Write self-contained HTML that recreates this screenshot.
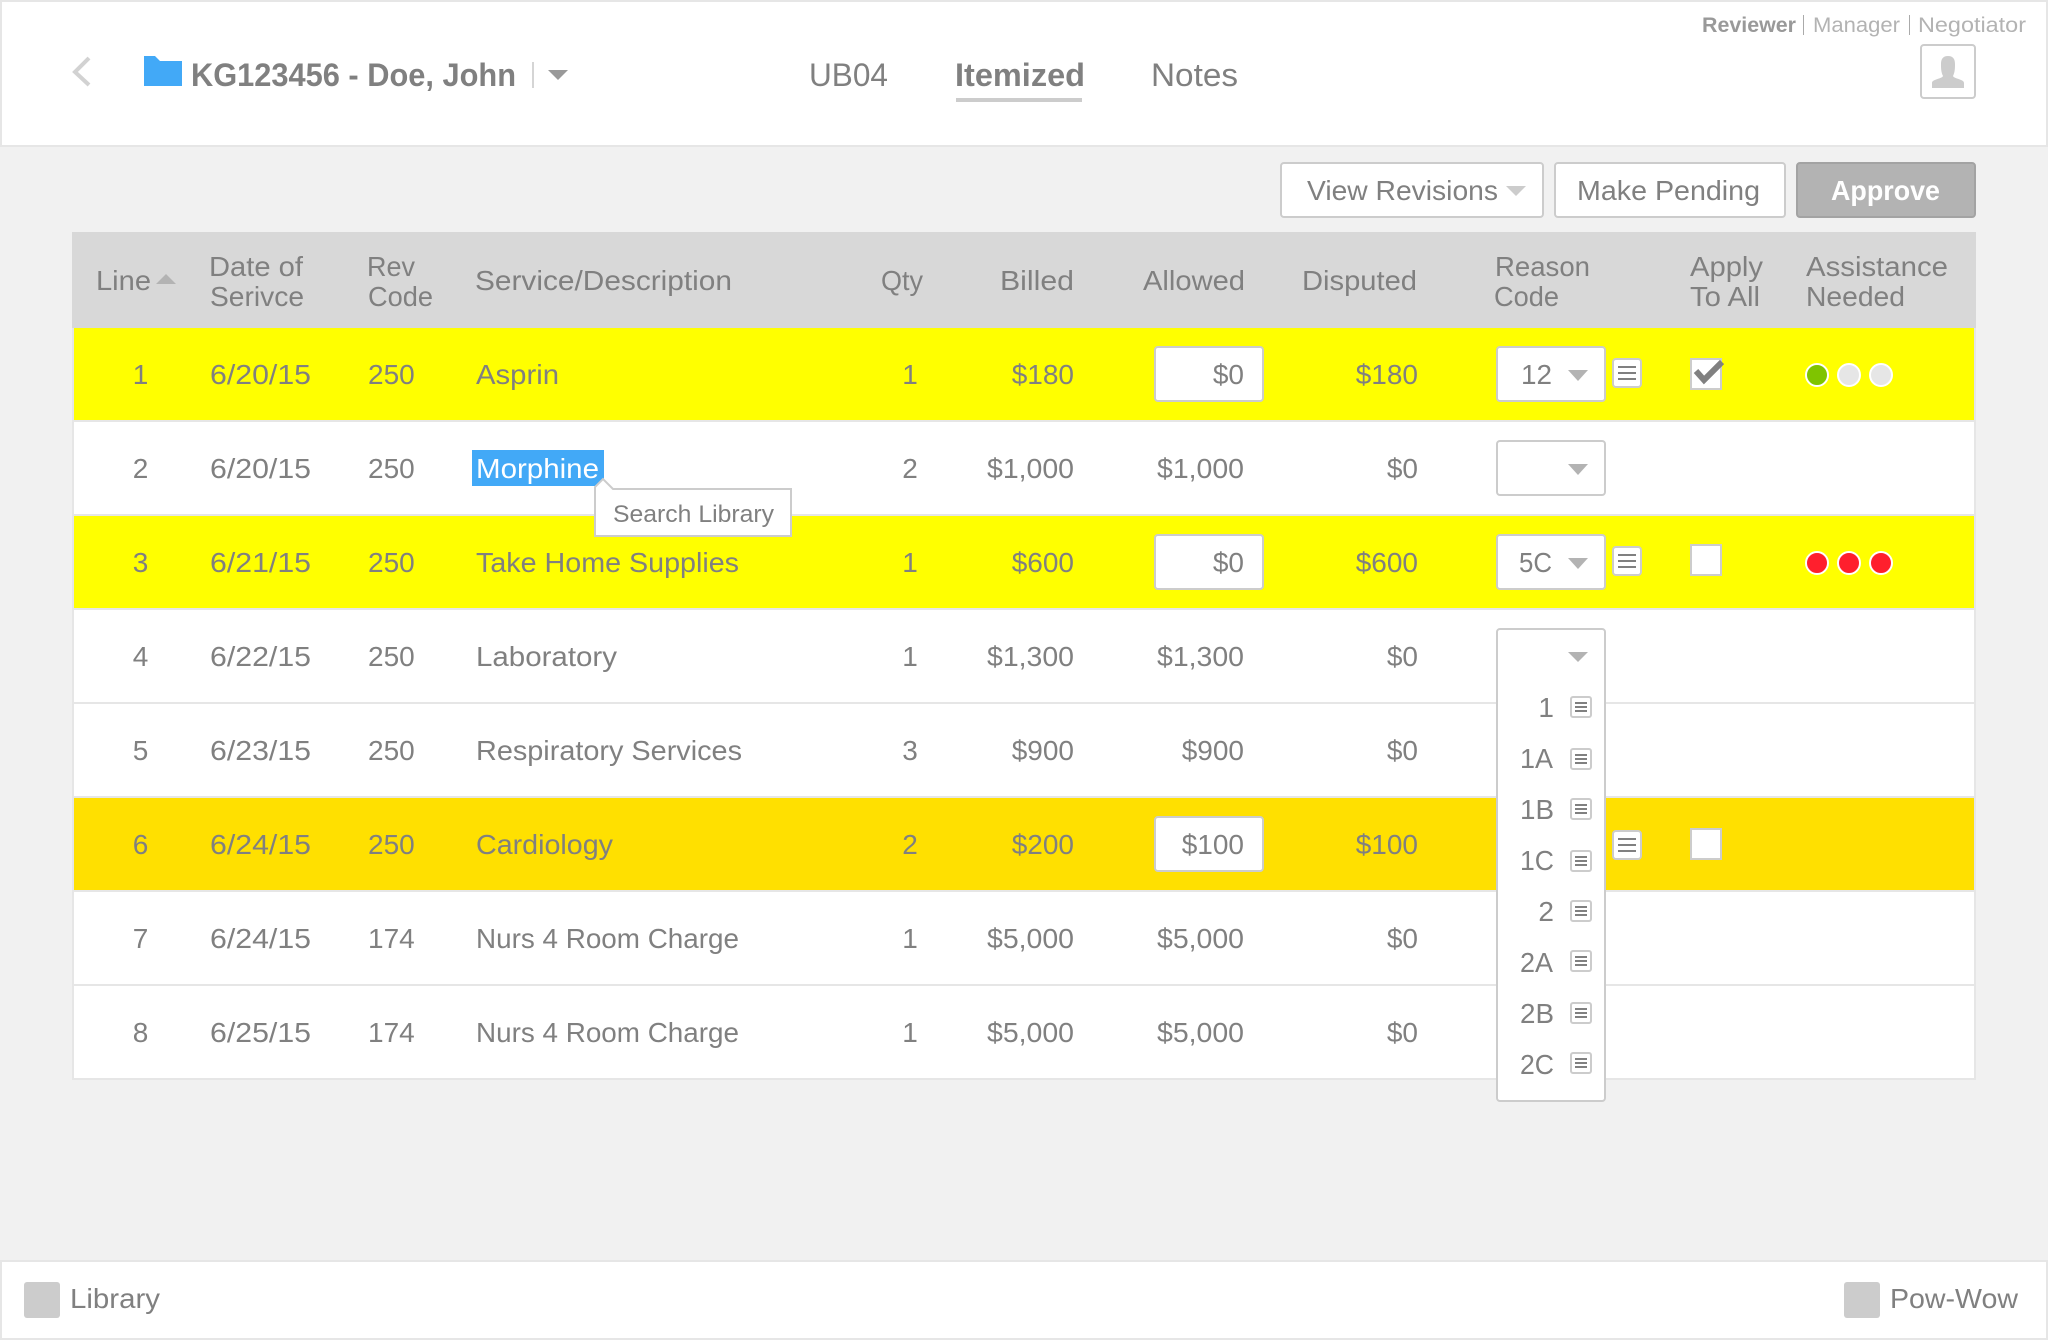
<!DOCTYPE html>
<html lang="en">
<head>
<meta charset="utf-8">
<title>KG123456 - Doe, John - Itemized</title>
<style>
html,body{margin:0;padding:0;background:#f1f1f1;width:2048px;height:1340px;overflow:hidden}
svg{display:block}
text{font-family:"Liberation Sans",Arial,sans-serif;font-size:28px;fill:#808080}
.e{text-anchor:end}
.m{text-anchor:middle}
.b{font-weight:bold}
.box{fill:#fff;stroke:#ccc;stroke-width:2}
.arr{fill:#b3b3b3}
</style>
</head>
<body>
<svg xmlns="http://www.w3.org/2000/svg" width="2048" height="1340" viewBox="0 0 2048 1340">
<defs>
<g id="note"><rect class="box" x="1" y="1" width="28" height="28" rx="3"/><rect x="6" y="8" width="18" height="2" fill="#808080"/><rect x="6" y="14" width="18" height="2" fill="#808080"/><rect x="6" y="20" width="18" height="2" fill="#808080"/></g>
<g id="mini"><rect class="box" x="1" y="1" width="20" height="20" rx="2"/><rect x="5" y="6" width="12" height="2" fill="#808080"/><rect x="5" y="10" width="12" height="2" fill="#808080"/><rect x="5" y="14" width="12" height="2" fill="#808080"/></g>
</defs>

<!-- top bar -->
<rect x="1" y="1" width="2046" height="145" fill="#fff" stroke="#e6e6e6" stroke-width="2"/>
<polyline points="89,58 75,72 89,85" fill="none" stroke="#d2d2d2" stroke-width="4"/>
<path d="M144 56H155L160 61H182V86H144Z" fill="#42a9f7"/>
<text class="b" x="191" y="86" style="font-size:32px" textLength="325" lengthAdjust="spacingAndGlyphs">KG123456 - Doe, John</text>
<rect x="532" y="62" width="2" height="26" fill="#d5d5d5"/>
<path d="M548 70H568L558 80Z" fill="#999"/>
<text x="809" y="86" style="font-size:32px" textLength="79" lengthAdjust="spacingAndGlyphs">UB04</text>
<text class="b" x="955" y="86" style="font-size:32px" textLength="130" lengthAdjust="spacingAndGlyphs">Itemized</text>
<rect x="956" y="98" width="126" height="4" fill="#ccc"/>
<text x="1151" y="86" style="font-size:32px" textLength="87" lengthAdjust="spacingAndGlyphs">Notes</text>
<text class="b" x="1702" y="32" style="font-size:21px;fill:#999" textLength="94" lengthAdjust="spacingAndGlyphs">Reviewer</text>
<rect x="1803" y="15" width="1" height="20" fill="#aaa"/>
<text x="1813" y="32" style="font-size:21px;fill:#b3b3b3" textLength="87" lengthAdjust="spacingAndGlyphs">Manager</text>
<rect x="1909" y="15" width="1" height="20" fill="#aaa"/>
<text x="1918" y="32" style="font-size:21px;fill:#b3b3b3" textLength="108" lengthAdjust="spacingAndGlyphs">Negotiator</text>
<rect class="box" x="1921" y="45" width="54" height="53" rx="3"/>
<path d="M1932 88V83C1932 79 1942 79 1943 76C1941 72 1941 68 1941 64C1941 59 1943 56 1948 56C1953 56 1955 59 1955 64C1955 68 1955 72 1953 76C1954 79 1964 79 1964 83V88Z" fill="#ccc"/>

<!-- action buttons -->
<rect class="box" x="1281" y="163" width="262" height="54" rx="3"/>
<text x="1307" y="200" textLength="191" lengthAdjust="spacingAndGlyphs">View Revisions</text>
<path d="M1506 186H1526L1516 196Z" fill="#ccc"/>
<rect class="box" x="1555" y="163" width="230" height="54" rx="3"/>
<text x="1577" y="200" textLength="183" lengthAdjust="spacingAndGlyphs">Make Pending</text>
<rect x="1797" y="163" width="178" height="54" rx="3" fill="#b3b3b3" stroke="#a3a3a3" stroke-width="2"/>
<text class="b" x="1831" y="200" style="fill:#fff" textLength="109" lengthAdjust="spacingAndGlyphs">Approve</text>

<!-- table head -->
<rect x="72" y="232" width="1904" height="96" fill="#d8d8d8"/>
<text x="96" y="290" textLength="55" lengthAdjust="spacingAndGlyphs">Line</text>
<path d="M156 284H176L166 274Z" fill="#b3b3b3"/>
<text x="209" y="276" textLength="94" lengthAdjust="spacingAndGlyphs">Date of</text>
<text x="210" y="306" textLength="94" lengthAdjust="spacingAndGlyphs">Serivce</text>
<text x="367" y="276" textLength="48" lengthAdjust="spacingAndGlyphs">Rev</text>
<text x="368" y="306" textLength="65" lengthAdjust="spacingAndGlyphs">Code</text>
<text x="475" y="290" textLength="257" lengthAdjust="spacingAndGlyphs">Service/Description</text>
<text x="881" y="290" textLength="42" lengthAdjust="spacingAndGlyphs">Qty</text>
<text x="1000" y="290" textLength="74" lengthAdjust="spacingAndGlyphs">Billed</text>
<text x="1143" y="290" textLength="102" lengthAdjust="spacingAndGlyphs">Allowed</text>
<text x="1302" y="290" textLength="115" lengthAdjust="spacingAndGlyphs">Disputed</text>
<text x="1495" y="276" textLength="95" lengthAdjust="spacingAndGlyphs">Reason</text>
<text x="1494" y="306" textLength="65" lengthAdjust="spacingAndGlyphs">Code</text>
<text x="1690" y="276" textLength="73" lengthAdjust="spacingAndGlyphs">Apply</text>
<text x="1690" y="306" textLength="70" lengthAdjust="spacingAndGlyphs">To All</text>
<text x="1806" y="276" textLength="142" lengthAdjust="spacingAndGlyphs">Assistance</text>
<text x="1806" y="306" textLength="99" lengthAdjust="spacingAndGlyphs">Needed</text>

<!-- row backgrounds -->
<rect x="72" y="328" width="1904" height="752" fill="#e6e6e6"/>
<rect x="74" y="328" width="1900" height="92" fill="#ffff00"/>
<rect x="74" y="422" width="1900" height="92" fill="#fff"/>
<rect x="74" y="516" width="1900" height="92" fill="#ffff00"/>
<rect x="74" y="610" width="1900" height="92" fill="#fff"/>
<rect x="74" y="704" width="1900" height="92" fill="#fff"/>
<rect x="74" y="798" width="1900" height="92" fill="#ffe000"/>
<rect x="74" y="892" width="1900" height="92" fill="#fff"/>
<rect x="74" y="986" width="1900" height="92" fill="#fff"/>

<!-- row 1 -->
<text class="m" x="140.5" y="384">1</text>
<text x="210" y="384" textLength="101" lengthAdjust="spacingAndGlyphs">6/20/15</text>
<text x="368" y="384">250</text>
<text x="476" y="384" textLength="83" lengthAdjust="spacingAndGlyphs">Asprin</text>
<text class="m" x="910" y="384">1</text>
<text class="e" x="1074" y="384">$180</text>
<rect class="box" x="1155" y="347" width="108" height="54" rx="3"/>
<text class="e" x="1244" y="384">$0</text>
<text class="e" x="1418" y="384">$180</text>
<rect class="box" x="1497" y="347" width="108" height="54" rx="3"/>
<text x="1521" y="384" textLength="31" lengthAdjust="spacingAndGlyphs">12</text>
<path class="arr" d="M1568 370H1588L1578 381Z"/>
<use href="#note" x="1612" y="358"/>
<rect class="box" x="1691" y="359" width="30" height="30"/>
<polyline points="1696,371 1704,380 1722,362" fill="none" stroke="#808080" stroke-width="6"/>
<circle cx="1817" cy="375" r="11" fill="#7fc400" stroke="#fff" stroke-width="2"/>
<circle cx="1849" cy="375" r="11" fill="#e6e6e6" stroke="#fff" stroke-width="2"/>
<circle cx="1881" cy="375" r="11" fill="#e6e6e6" stroke="#fff" stroke-width="2"/>

<!-- row 2 -->
<text class="m" x="140.5" y="478">2</text>
<text x="210" y="478" textLength="101" lengthAdjust="spacingAndGlyphs">6/20/15</text>
<text x="368" y="478">250</text>
<rect x="472" y="450" width="132" height="36" fill="#42a9f7"/>
<text x="476" y="478" style="fill:#fff" textLength="123" lengthAdjust="spacingAndGlyphs">Morphine</text>
<text class="m" x="910" y="478">2</text>
<text class="e" x="1074" y="478" textLength="87" lengthAdjust="spacingAndGlyphs">$1,000</text>
<text class="e" x="1244" y="478" textLength="87" lengthAdjust="spacingAndGlyphs">$1,000</text>
<text class="e" x="1418" y="478">$0</text>
<rect class="box" x="1497" y="441" width="108" height="54" rx="3"/>
<path class="arr" d="M1568 464H1588L1578 475Z"/>

<!-- row 3 -->
<text class="m" x="140.5" y="572">3</text>
<text x="210" y="572" textLength="101" lengthAdjust="spacingAndGlyphs">6/21/15</text>
<text x="368" y="572">250</text>
<text x="476" y="572" textLength="263" lengthAdjust="spacingAndGlyphs">Take Home Supplies</text>
<text class="m" x="910" y="572">1</text>
<text class="e" x="1074" y="572">$600</text>
<rect class="box" x="1155" y="535" width="108" height="54" rx="3"/>
<text class="e" x="1244" y="572">$0</text>
<text class="e" x="1418" y="572">$600</text>
<rect class="box" x="1497" y="535" width="108" height="54" rx="3"/>
<text x="1519" y="572" textLength="33" lengthAdjust="spacingAndGlyphs">5C</text>
<path class="arr" d="M1568 558H1588L1578 569Z"/>
<use href="#note" x="1612" y="546"/>
<rect class="box" x="1691" y="545" width="30" height="30"/>
<circle cx="1817" cy="563" r="11" fill="#ff1f2d" stroke="#fff" stroke-width="2"/>
<circle cx="1849" cy="563" r="11" fill="#ff1f2d" stroke="#fff" stroke-width="2"/>
<circle cx="1881" cy="563" r="11" fill="#ff1f2d" stroke="#fff" stroke-width="2"/>

<!-- tooltip -->
<path d="M595 536V487L603 479L613 489H791V536Z" fill="#fff" stroke="#ccc" stroke-width="2"/>
<text x="613" y="522" style="font-size:24px" textLength="161" lengthAdjust="spacingAndGlyphs">Search Library</text>

<!-- row 4 -->
<text class="m" x="140.5" y="666">4</text>
<text x="210" y="666" textLength="101" lengthAdjust="spacingAndGlyphs">6/22/15</text>
<text x="368" y="666">250</text>
<text x="476" y="666" textLength="141" lengthAdjust="spacingAndGlyphs">Laboratory</text>
<text class="m" x="910" y="666">1</text>
<text class="e" x="1074" y="666" textLength="87" lengthAdjust="spacingAndGlyphs">$1,300</text>
<text class="e" x="1244" y="666" textLength="87" lengthAdjust="spacingAndGlyphs">$1,300</text>
<text class="e" x="1418" y="666">$0</text>

<!-- row 5 -->
<text class="m" x="140.5" y="760">5</text>
<text x="210" y="760" textLength="101" lengthAdjust="spacingAndGlyphs">6/23/15</text>
<text x="368" y="760">250</text>
<text x="476" y="760" textLength="266" lengthAdjust="spacingAndGlyphs">Respiratory Services</text>
<text class="m" x="910" y="760">3</text>
<text class="e" x="1074" y="760">$900</text>
<text class="e" x="1244" y="760">$900</text>
<text class="e" x="1418" y="760">$0</text>

<!-- row 6 -->
<text class="m" x="140.5" y="854">6</text>
<text x="210" y="854" textLength="101" lengthAdjust="spacingAndGlyphs">6/24/15</text>
<text x="368" y="854">250</text>
<text x="476" y="854" textLength="137" lengthAdjust="spacingAndGlyphs">Cardiology</text>
<text class="m" x="910" y="854">2</text>
<text class="e" x="1074" y="854">$200</text>
<rect class="box" x="1155" y="817" width="108" height="54" rx="3"/>
<text class="e" x="1244" y="854">$100</text>
<text class="e" x="1418" y="854">$100</text>
<use href="#note" x="1612" y="830"/>
<rect class="box" x="1691" y="829" width="30" height="30"/>

<!-- row 7 -->
<text class="m" x="140.5" y="948">7</text>
<text x="210" y="948" textLength="101" lengthAdjust="spacingAndGlyphs">6/24/15</text>
<text x="368" y="948">174</text>
<text x="476" y="948" textLength="263" lengthAdjust="spacingAndGlyphs">Nurs 4 Room Charge</text>
<text class="m" x="910" y="948">1</text>
<text class="e" x="1074" y="948" textLength="87" lengthAdjust="spacingAndGlyphs">$5,000</text>
<text class="e" x="1244" y="948" textLength="87" lengthAdjust="spacingAndGlyphs">$5,000</text>
<text class="e" x="1418" y="948">$0</text>

<!-- row 8 -->
<text class="m" x="140.5" y="1042">8</text>
<text x="210" y="1042" textLength="101" lengthAdjust="spacingAndGlyphs">6/25/15</text>
<text x="368" y="1042">174</text>
<text x="476" y="1042" textLength="263" lengthAdjust="spacingAndGlyphs">Nurs 4 Room Charge</text>
<text class="m" x="910" y="1042">1</text>
<text class="e" x="1074" y="1042" textLength="87" lengthAdjust="spacingAndGlyphs">$5,000</text>
<text class="e" x="1244" y="1042" textLength="87" lengthAdjust="spacingAndGlyphs">$5,000</text>
<text class="e" x="1418" y="1042">$0</text>

<!-- open dropdown -->
<rect class="box" x="1497" y="629" width="108" height="472" rx="3"/>
<path class="arr" d="M1568 652H1588L1578 662Z"/>
<text class="e" x="1554" y="717">1</text><use href="#mini" x="1570" y="696"/>
<text x="1520" y="768" textLength="33" lengthAdjust="spacingAndGlyphs">1A</text><use href="#mini" x="1570" y="748"/>
<text x="1520" y="819" textLength="34" lengthAdjust="spacingAndGlyphs">1B</text><use href="#mini" x="1570" y="798"/>
<text x="1520" y="870" textLength="34" lengthAdjust="spacingAndGlyphs">1C</text><use href="#mini" x="1570" y="850"/>
<text class="e" x="1554" y="921">2</text><use href="#mini" x="1570" y="900"/>
<text x="1520" y="972" textLength="33" lengthAdjust="spacingAndGlyphs">2A</text><use href="#mini" x="1570" y="950"/>
<text x="1520" y="1023" textLength="34" lengthAdjust="spacingAndGlyphs">2B</text><use href="#mini" x="1570" y="1002"/>
<text x="1520" y="1074" textLength="34" lengthAdjust="spacingAndGlyphs">2C</text><use href="#mini" x="1570" y="1052"/>

<!-- footer -->
<rect x="1" y="1261" width="2046" height="78" fill="#fff" stroke="#e6e6e6" stroke-width="2"/>
<rect x="24" y="1282" width="36" height="36" rx="3" fill="#ccc"/>
<text x="70" y="1308" textLength="90" lengthAdjust="spacingAndGlyphs">Library</text>
<rect x="1844" y="1282" width="36" height="36" rx="3" fill="#ccc"/>
<text x="1890" y="1308" textLength="128" lengthAdjust="spacingAndGlyphs">Pow-Wow</text>
</svg>
</body>
</html>
